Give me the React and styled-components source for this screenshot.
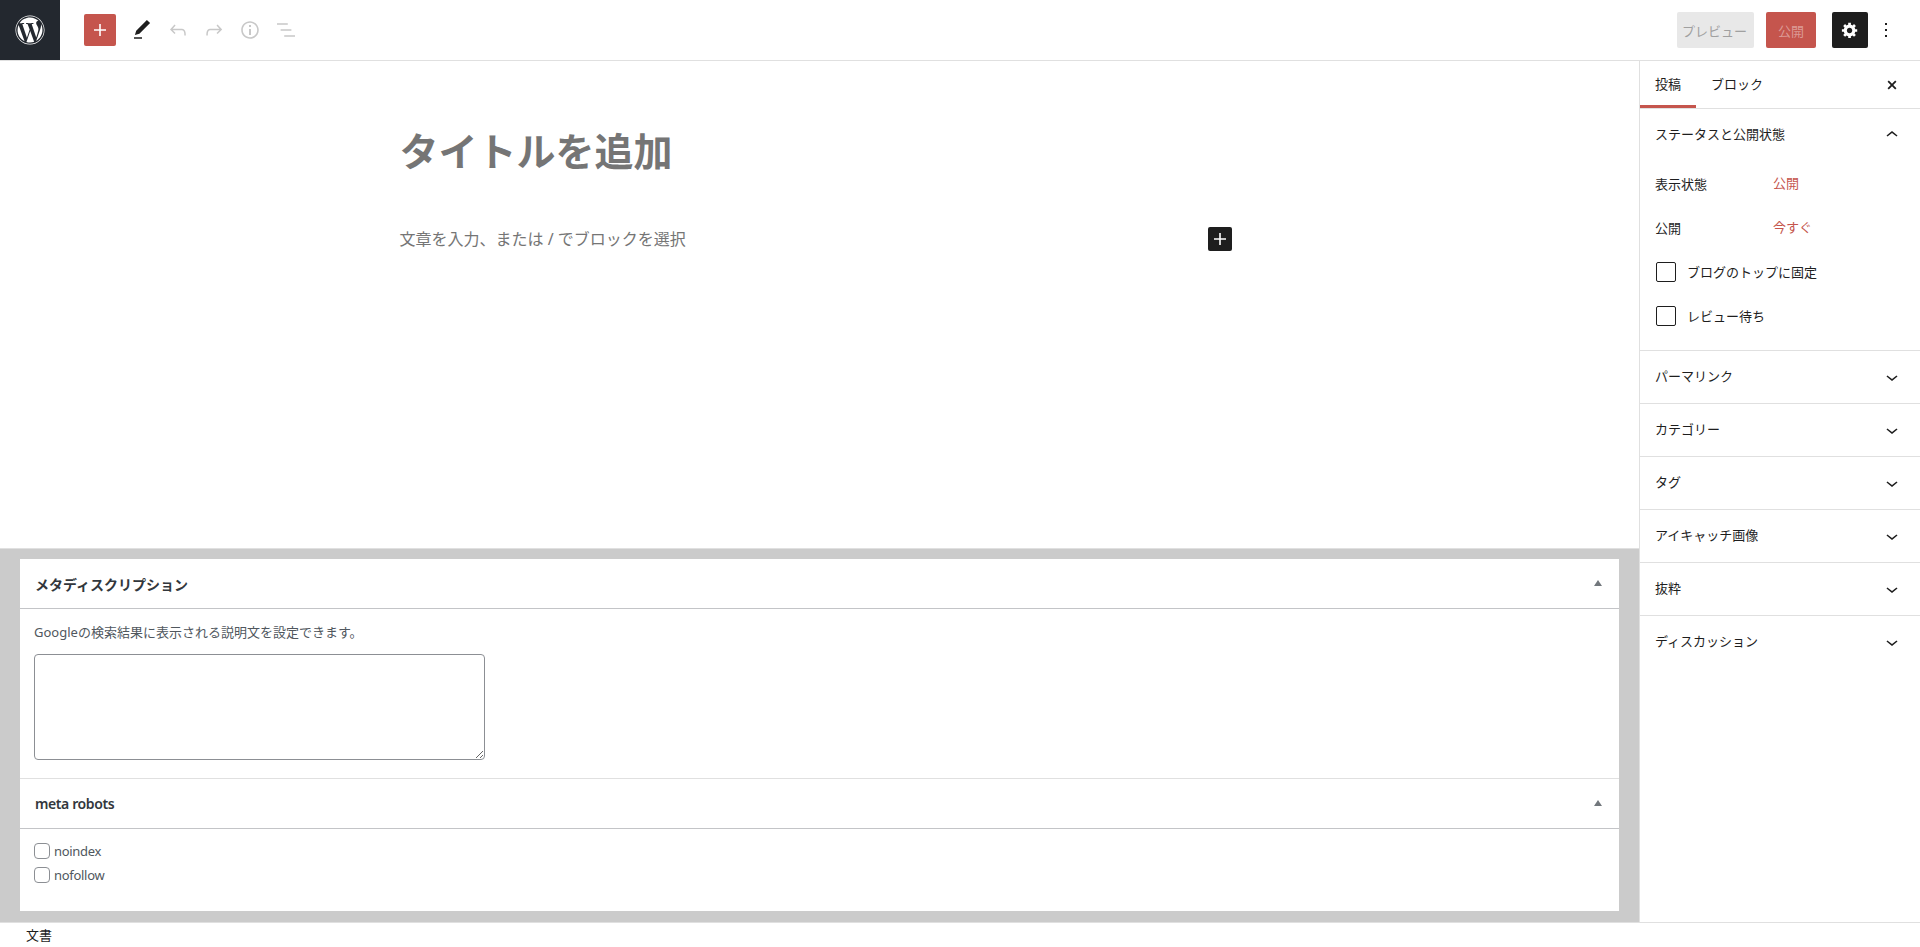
import styled, { createGlobalStyle } from 'styled-components'
import { FaWordpress } from 'react-icons/fa'

const RED = '#c5554d'
const FONT = `"Noto Sans", "Noto Sans CJK JP", sans-serif`

const GlobalStyle = createGlobalStyle`
  * { box-sizing: border-box; }
  html, body { margin: 0; padding: 0; background: #fff; overflow: hidden; }
  body { font-family: ${FONT}; font-size: 13px; color: #1e1e1e; }
`

const Page = styled.div`
  height: 100vh;
  display: flex;
  flex-direction: column;
`

const Header = styled.header`
  height: 61px;
  flex: none;
  display: flex;
  align-items: center;
  border-bottom: 1px solid #e0e0e0;
`

const LogoBox = styled.div`
  width: 60px;
  height: 60px;
  flex: none;
  background: #23282f;
  color: #fff;
  display: flex;
  align-items: center;
  justify-content: center;
`

const ToolGroup = styled.div`
  display: flex;
  align-items: center;
  margin-left: 24px;
  flex: 1;
`

const AddButton = styled.button`
  width: 32px;
  height: 32px;
  padding: 0;
  border: 0;
  border-radius: 2px;
  background: ${RED};
  color: #fff;
  display: flex;
  align-items: center;
  justify-content: center;
  margin-right: 8px;
`

const ToolButton = styled.div`
  width: 36px;
  height: 36px;
  display: flex;
  align-items: center;
  justify-content: center;
  color: ${(p) => (p.$off ? '#c8c8c8' : '#1e1e1e')};
`

const Actions = styled.div`
  display: flex;
  align-items: center;
  padding-right: 16px;
`

const PreviewButton = styled.div`
  width: 77px;
  height: 36px;
  border-radius: 2px;
  background: #e8e8e8;
  color: #a0a0a0;
  display: flex;
  align-items: center;
  justify-content: center;
  padding-right: 2px;
  margin-right: 12px;
`

const PublishButton = styled.div`
  width: 50px;
  height: 36px;
  border-radius: 2px;
  background: ${RED};
  color: #dc9a95;
  display: flex;
  align-items: center;
  justify-content: center;
  margin-right: 16px;
`

const SettingsButton = styled.div`
  width: 36px;
  height: 36px;
  border-radius: 2px;
  background: #1e1e1e;
  color: #fff;
  display: flex;
  align-items: center;
  justify-content: center;
`

const Body = styled.div`
  flex: 1;
  min-height: 0;
  display: flex;
`

const EditorColumn = styled.main`
  flex: 1;
  min-width: 0;
  display: flex;
  flex-direction: column;
`

const Canvas = styled.div`
  flex: 1;
  display: flex;
  flex-direction: column;
  align-items: center;
`

const PostColumn = styled.div`
  width: 840px;
  padding-top: 60px;
`

const TitleText = styled.h1`
  margin: 0;
  font-size: 39px;
  line-height: 60px;
  font-weight: 700;
  color: #757575;
`

const ParagraphRow = styled.div`
  margin-top: 45px;
  height: 26px;
  display: flex;
  align-items: center;
  justify-content: space-between;
  padding-right: 8px;
  font-size: 16px;
  color: #757575;
`

const ParagraphText = styled.span`
  margin-top: -2px;
`

const InlineAdd = styled.div`
  width: 24px;
  height: 24px;
  border-radius: 2px;
  background: #1e1e1e;
  color: #fff;
  display: flex;
  align-items: center;
  justify-content: center;
`

const MetaArea = styled.section`
  flex: none;
  background: #cbcbcb;
  padding: 10px 20px 11px;
  border-top: 1px solid #e0e0e0;
`

const MetaBox = styled.div`
  background: #fff;
  & + & { border-top: 1px solid #e0e0e0; }
`

const MetaHead = styled.div`
  height: 50px;
  display: flex;
  align-items: center;
  justify-content: space-between;
  padding: 0 17px 0 15px;
  border-bottom: 1px solid #c3c4c7;
  font-size: 14px;
  font-weight: 600;
  color: #32373c;
  letter-spacing: ${(p) => (p.$latin ? '-0.4px' : '0')};
`

const Triangle = styled.span`
  width: 0;
  height: 0;
  border-left: 4px solid transparent;
  border-right: 4px solid transparent;
  border-bottom: 6px solid #72777c;
  margin-top: -2px;
`

const MetaBody = styled.div`
  padding: ${(p) => p.$pad};
  color: #50575e;
`

const MetaText = styled.p`
  margin: 0 0 13px;
  line-height: 18px;
`

const MetaInput = styled.textarea`
  display: block;
  width: 451px;
  height: 106px;
  border: 1px solid #8c8f94;
  border-radius: 4px;
  background: #fff;
`

const MetaCheck = styled.label`
  display: flex;
  align-items: center;
  height: 24px;
  gap: 4px;
  letter-spacing: -0.3px;
`

const SmallBox = styled.span`
  width: 16px;
  height: 16px;
  border: 1px solid #8c8f94;
  border-radius: 4px;
`

const Sidebar = styled.aside`
  width: 281px;
  flex: none;
  border-left: 1px solid #e0e0e0;
`

const Tabs = styled.div`
  height: 48px;
  display: flex;
  align-items: stretch;
  border-bottom: 1px solid #e0e0e0;
  padding-right: 19px;
`

const Tab = styled.div`
  padding: 0 15px;
  display: flex;
  align-items: center;
  padding-bottom: 2px;
  box-shadow: ${(p) => (p.$active ? `inset 0 -3px 0 ${RED}` : 'none')};
`

const CloseIcon = styled.div`
  margin-left: auto;
  display: flex;
  align-items: center;
`

const Panel = styled.div`
  border-bottom: 1px solid #e0e0e0;
  &:last-child { border-bottom: 0; }
`

const PanelHead = styled.div`
  height: 52px;
  display: flex;
  align-items: center;
  justify-content: space-between;
  padding: 0 16px;
`

const PanelTitle = styled.span`
  margin: -4px 0 0 -1px;
`

const PanelBody = styled.div`
  padding: 1px 16px 12px;
`

const InfoRow = styled.div`
  height: 44px;
  display: flex;
  align-items: center;
`

const InfoLabel = styled.span`
  width: 118px;
  margin: -2px 0 0 -1px;
`

const InfoValue = styled.span`
  color: ${RED};
  margin-top: -3px;
`

const CheckRow = styled.label`
  height: 44px;
  display: flex;
  align-items: center;
  gap: 11px;
`

const CheckText = styled.span`
  margin-top: -2px;
`

const BigBox = styled.span`
  width: 20px;
  height: 20px;
  border: 1px solid #1e1e1e;
  border-radius: 2px;
`

const Footer = styled.footer`
  height: 25px;
  flex: none;
  display: flex;
  align-items: center;
  padding: 0 0 2px 26px;
  border-top: 1px solid #e0e0e0;
`

const Icon = ({ d, size = 24, box = 24 }) => (
  <svg width={size} height={size} viewBox={`0 0 ${box} ${box}`} fill="currentColor" aria-hidden="true">
    <path d={d} />
  </svg>
)

const plus = 'M18 11.2h-5.2V6h-1.6v5.2H6v1.6h5.2V18h1.6v-5.2H18z'
const pencil = 'M20.1 5.1L16.9 2 6.2 12.7l-1.3 4.4 4.5-1.3L20.1 5.1zM4 20.8h8v-1.5H4v1.5z'
const undo = 'M18.3 11.7c-.6-.6-1.4-.9-2.3-.9H6.7l2.9-3.3-1.1-1-4.5 5L8.5 16l1-1-2.7-2.7H16c.5 0 .9.2 1.3.5 1 1 1 3.4 1 4.5v.3h1.5v-.2c0-1.5 0-4.3-1.5-5.7z'
const redo = 'M15.6 6.5l-1.1 1 2.9 3.3H8c-.9 0-1.7.3-2.3.9-1.4 1.5-1.4 4.2-1.4 5.6v.2h1.5v-.3c0-1.1 0-3.5 1-4.5.3-.3.7-.5 1.3-.5h9.2L14.5 15l1.1 1.1 4.6-4.6-4.6-5z'
const info = 'M12 3.2c-4.8 0-8.8 3.9-8.8 8.8 0 4.8 3.9 8.8 8.8 8.8 4.8 0 8.8-3.9 8.8-8.8 0-4.8-4-8.8-8.8-8.8zm0 16c-4 0-7.2-3.3-7.2-7.2C4.8 8 8 4.8 12 4.8s7.2 3.3 7.2 7.2c0 4-3.2 7.2-7.2 7.2zM11 17h2v-6h-2v6zm0-8h2V7h-2v2z'
const list = 'M13.8 5.2H3v1.5h10.8V5.2zm-3.6 12v1.5H21v-1.5H10.2zm7.2-6H6.6v1.5h10.8v-1.5z'
const cog = 'M18 12h-2.18c-.17.7-.44 1.35-.81 1.93l1.54 1.54-2.1 2.1-1.54-1.54c-.58.36-1.23.63-1.91.79V19H8v-2.18c-.68-.16-1.33-.43-1.91-.79l-1.54 1.54-2.12-2.12 1.54-1.54c-.36-.58-.63-1.23-.79-1.91H1V9.03h2.17c.16-.7.44-1.35.8-1.94L2.43 5.55l2.1-2.1 1.54 1.54c.58-.37 1.24-.64 1.93-.81V2h3v2.18c.68.16 1.33.43 1.91.79l1.54-1.54 2.12 2.12-1.54 1.54c.36.59.64 1.24.8 1.94H18V12zm-8.5 1.5c1.66 0 3-1.34 3-3s-1.34-3-3-3-3 1.34-3 3 1.34 3 3 3z'
const more = 'M13 19h-2v-2h2v2zm0-6h-2v-2h2v2zm0-6h-2V5h2v2z'
const close = 'M14.95 6.46L11.41 10l3.54 3.53-1.41 1.42L10 11.42l-3.53 3.53-1.42-1.42L8.58 10 5.05 6.47l1.42-1.42L10 8.58l3.54-3.53z'
const up = 'M6.5 12.4L12 8l5.5 4.4-.9 1.2L12 10l-4.5 3.6-1-1.2z'
const down = 'M17.5 11.6L12 16l-5.5-4.4.9-1.2L12 14l4.5-3.6 1 1.2z'

const panels = ['パーマリンク', 'カテゴリー', 'タグ', 'アイキャッチ画像', '抜粋', 'ディスカッション']

export default function App() {
  return (
    <Page>
      <GlobalStyle />
      <Header>
        <LogoBox><FaWordpress size={30} /></LogoBox>
        <ToolGroup>
          <AddButton><Icon d={plus} /></AddButton>
          <ToolButton><Icon d={pencil} /></ToolButton>
          <ToolButton $off><Icon d={undo} /></ToolButton>
          <ToolButton $off><Icon d={redo} /></ToolButton>
          <ToolButton $off><Icon d={info} /></ToolButton>
          <ToolButton $off><Icon d={list} /></ToolButton>
        </ToolGroup>
        <Actions>
          <PreviewButton>プレビュー</PreviewButton>
          <PublishButton>公開</PublishButton>
          <SettingsButton><Icon d={cog} box={20} size={18} /></SettingsButton>
          <ToolButton><Icon d={more} /></ToolButton>
        </Actions>
      </Header>
      <Body>
        <EditorColumn>
          <Canvas>
            <PostColumn>
              <TitleText>タイトルを追加</TitleText>
              <ParagraphRow>
                <ParagraphText>文章を入力、または / でブロックを選択</ParagraphText>
                <InlineAdd><Icon d={plus} /></InlineAdd>
              </ParagraphRow>
            </PostColumn>
          </Canvas>
          <MetaArea>
            <MetaBox>
              <MetaHead>メタディスクリプション<Triangle /></MetaHead>
              <MetaBody $pad="14px 14px 18px">
                <MetaText>Googleの検索結果に表示される説明文を設定できます。</MetaText>
                <MetaInput />
              </MetaBody>
            </MetaBox>
            <MetaBox>
              <MetaHead $latin>meta robots<Triangle /></MetaHead>
              <MetaBody $pad="10px 14px 24px">
                <MetaCheck><SmallBox />noindex</MetaCheck>
                <MetaCheck><SmallBox />nofollow</MetaCheck>
              </MetaBody>
            </MetaBox>
          </MetaArea>
        </EditorColumn>
        <Sidebar>
          <Tabs>
            <Tab $active>投稿</Tab>
            <Tab>ブロック</Tab>
            <CloseIcon><Icon d={close} box={20} size={18} /></CloseIcon>
          </Tabs>
          <Panel>
            <PanelHead><PanelTitle>ステータスと公開状態</PanelTitle><Icon d={up} /></PanelHead>
            <PanelBody>
              <InfoRow><InfoLabel>表示状態</InfoLabel><InfoValue>公開</InfoValue></InfoRow>
              <InfoRow><InfoLabel>公開</InfoLabel><InfoValue>今すぐ</InfoValue></InfoRow>
              <CheckRow><BigBox /><CheckText>ブログのトップに固定</CheckText></CheckRow>
              <CheckRow><BigBox /><CheckText>レビュー待ち</CheckText></CheckRow>
            </PanelBody>
          </Panel>
          {panels.map((name) => (
            <Panel key={name}>
              <PanelHead><PanelTitle>{name}</PanelTitle><Icon d={down} /></PanelHead>
            </Panel>
          ))}
        </Sidebar>
      </Body>
      <Footer>文書</Footer>
    </Page>
  )
}
